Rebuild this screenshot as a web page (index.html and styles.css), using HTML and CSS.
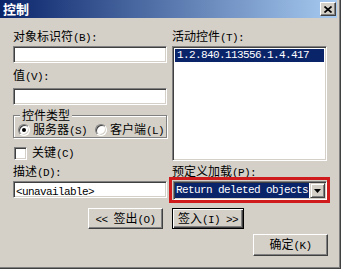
FILE: index.html
```html
<!DOCTYPE html>
<html lang="zh-CN">
<head>
<meta charset="utf-8">
<title>控制</title>
<link rel="stylesheet" href="styles.css">
</head>
<body>
<div class="window">
  <div class="frame">
    <div class="titlebar">
      <span class="title">控制</span>
      <span class="close"><svg width="8" height="7" viewBox="0 0 8 7"><path d="M0.5 0.5 L7.5 6.5 M7.5 0.5 L0.5 6.5" stroke="#000" stroke-width="1.7" fill="none"/></svg></span>
    </div>
    <div class="top">
      <div class="col left">
        <div class="label">对象标识符<span class="m">(B):</span></div>
        <div class="field"></div>
        <div class="label l2">值<span class="m">(V):</span></div>
        <div class="field f2"></div>
        <fieldset class="group">
          <legend>控件类型</legend>
          <div class="radios">
            <span class="opt"><span class="radio on"></span><span class="txt">服务器<span class="m">(S)</span></span></span>
            <span class="opt"><span class="radio"></span><span class="txt">客户端<span class="m">(L)</span></span></span>
          </div>
        </fieldset>
        <div class="check-row"><span class="check"></span><span class="txt">关键<span class="m">(C)</span></span></div>
      </div>
      <div class="col right">
        <div class="label">活动控件<span class="m">(T):</span></div>
        <div class="listbox">
          <div class="item sel m">1.2.840.113556.1.4.417</div>
        </div>
      </div>
    </div>
    <div class="bottom">
      <div class="label">描述<span class="m">(D):</span></div>
      <div class="label">预定义加载<span class="m">(P):</span></div>
      <div class="field desc"><span class="m">&lt;unavailable&gt;</span></div>
      <div class="combo">
        <span class="combo-text m">Return deleted objects</span>
        <span class="combo-btn"><svg width="7" height="4" viewBox="0 0 7 4"><path d="M0 0 H7 L3.5 4 Z" fill="#000"/></svg></span>
      </div>
      <span class="btn btn-out"><span class="txt"><span class="m">&lt;&lt;&nbsp;</span>签出<span class="m">(O)</span></span></span>
      <span class="btn btn-in default"><span class="txt">签入<span class="m">(I)&nbsp;&gt;&gt;</span></span></span>
    </div>
    <div class="ok-row">
      <span class="btn btn-ok"><span class="txt">确定<span class="m">(K)</span></span></span>
    </div>
  </div>
</div>
</body>
</html>
```
FILE: styles.css
```css
* { box-sizing: border-box; }

body {
  margin: 0;
  width: 341px;
  height: 269px;
  overflow: hidden;
  background: #d4d0c8;
  font-family: "Noto Sans CJK SC", "Noto Sans CJK JP", sans-serif;
  font-size: 12px;
  color: #000;
}

.m {
  font-family: "Liberation Mono", monospace;
  font-size: 11px;
  letter-spacing: -0.6px;
}

.txt {
  line-height: 13px;
  white-space: nowrap;
}

.window {
  width: 341px;
  height: 269px;
  border-right: 1px solid #404040;
  border-bottom: 1px solid #404040;
}

.frame {
  height: 100%;
  border-right: 1px solid #808080;
  border-bottom: 1px solid #808080;
  padding: 0 2px 2px 0;
  background: #d4d0c8;
}

.titlebar {
  height: 18px;
  display: flex;
  align-items: center;
  justify-content: space-between;
  padding: 0 1px 0 3px;
  background: linear-gradient(to right, #0a246a, #a6caf0);
}

.title {
  color: #fff;
  font-weight: bold;
  font-size: 13px;
  line-height: 18px;
}

.close {
  width: 16px;
  height: 14px;
  display: flex;
  align-items: center;
  justify-content: center;
  background: #d4d0c8;
  border: 1px solid;
  border-color: #fff #404040 #404040 #fff;
  box-shadow: inset -1px -1px 0 #808080;
}

.top {
  display: flex;
  gap: 5px;
  padding-left: 13px;
  margin-top: 11px;
}

.col {
  display: flex;
  flex-direction: column;
}

.left { width: 154px; }
.right { width: 155px; }

.label {
  height: 14px;
  line-height: 14px;
  white-space: nowrap;
}

.field {
  height: 17px;
  margin-top: 3px;
  background: #fff;
  border: 1px solid;
  border-color: #808080 #fff #fff #808080;
  box-shadow: inset 1px 1px 0 #404040, inset -1px -1px 0 #d4d0c8;
}

.l2 { margin-top: 5px; }
.f2 { margin-top: 6px; }

.group {
  margin: 4px 0 0;
  padding: 0;
  width: 154px;
  min-inline-size: 0;
  border: 1px solid #808080;
  box-shadow: 1px 1px 0 #fff, inset 1px 1px 0 #fff;
}

.group legend {
  margin-left: 6px;
  padding: 0 2px;
  height: 12px;
  line-height: 12px;
  background: #d4d0c8;
}

.radios {
  display: flex;
  align-items: center;
  height: 16px;
  padding-left: 4px;
  padding-top: 2px;
  white-space: nowrap;
}

.opt {
  display: flex;
  align-items: center;
  gap: 3px;
}

.opt + .opt { margin-left: 8px; }

.radio {
  position: relative;
  width: 12px;
  height: 12px;
  flex: none;
  border-radius: 50%;
  background: #fff;
  border: 1px solid;
  border-color: #808080 #fff #fff #808080;
  box-shadow: inset 1px 1px 0 #404040, inset -1px -1px 0 #d4d0c8;
}

.radio.on::after {
  content: "";
  position: absolute;
  left: 3px;
  top: 3px;
  width: 4px;
  height: 4px;
  border-radius: 50%;
  background: #000;
}

.check-row {
  margin-top: 8px;
  height: 14px;
  display: flex;
  align-items: center;
  gap: 5px;
  padding-left: 1px;
}

.check {
  width: 13px;
  height: 13px;
  flex: none;
  background: #fff;
  border: 1px solid;
  border-color: #808080 #fff #fff #808080;
  box-shadow: inset 1px 1px 0 #404040, inset -1px -1px 0 #d4d0c8;
}

.listbox {
  margin-top: 3px;
  height: 115px;
  padding: 2px;
  background: #fff;
  border: 1px solid;
  border-color: #808080 #fff #fff #808080;
  box-shadow: inset 1px 1px 0 #404040, inset -1px -1px 0 #d4d0c8;
}

.item {
  height: 13px;
  line-height: 13px;
  padding-left: 2px;
  white-space: nowrap;
}

.item.sel {
  background: #0a246a;
  color: #fff;
}

.bottom {
  display: grid;
  grid-template-columns: 154px 155px;
  column-gap: 5px;
  padding-left: 13px;
  margin-top: 3px;
}

.desc {
  line-height: 15px;
  padding-left: 2px;
  white-space: nowrap;
}

.combo {
  position: relative;
  margin-top: 3px;
  margin-left: 1px;
  width: 154px;
  height: 19px;
  display: flex;
  padding: 1px;
  background: #fff;
  border: 1px solid;
  border-color: #808080 #fff #fff #808080;
  box-shadow: inset 1px 1px 0 #404040, inset -1px -1px 0 #d4d0c8;
}

.combo::after {
  content: "";
  position: absolute;
  inset: -5px -4px -4px -5px;
  border: 3px solid #cf1b1b;
}

.combo-text {
  flex: 1;
  margin-right: 1px;
  padding-left: 1px;
  line-height: 15px;
  background: #0a246a;
  color: #fff;
  white-space: nowrap;
  overflow: hidden;
}

.combo-btn {
  width: 15px;
  height: 15px;
  display: flex;
  align-items: center;
  justify-content: center;
  background: #d4d0c8;
  border: 1px solid;
  border-color: #d4d0c8 #404040 #404040 #d4d0c8;
  box-shadow: inset 1px 1px 0 #fff, inset -1px -1px 0 #808080;
}

.btn {
  height: 21px;
  display: flex;
  align-items: center;
  justify-content: center;
  white-space: nowrap;
  background: #d4d0c8;
  border: 1px solid;
  border-color: #fff #404040 #404040 #fff;
  box-shadow: inset -1px -1px 0 #808080;
}

.btn.default {
  border-color: #000;
  box-shadow: inset 1px 1px 0 #fff, inset -1px -1px 0 #404040, inset -2px -2px 0 #808080;
}

.btn-out {
  margin-top: 8px;
  width: 75px;
  justify-self: end;
  margin-right: 4px;
}

.btn-in {
  margin-top: 8px;
  width: 72px;
  justify-self: start;
}

.ok-row {
  display: flex;
  justify-content: flex-end;
  padding-right: 9px;
  margin-top: 5px;
}

.btn-ok {
  width: 75px;
  height: 22px;
}
```
